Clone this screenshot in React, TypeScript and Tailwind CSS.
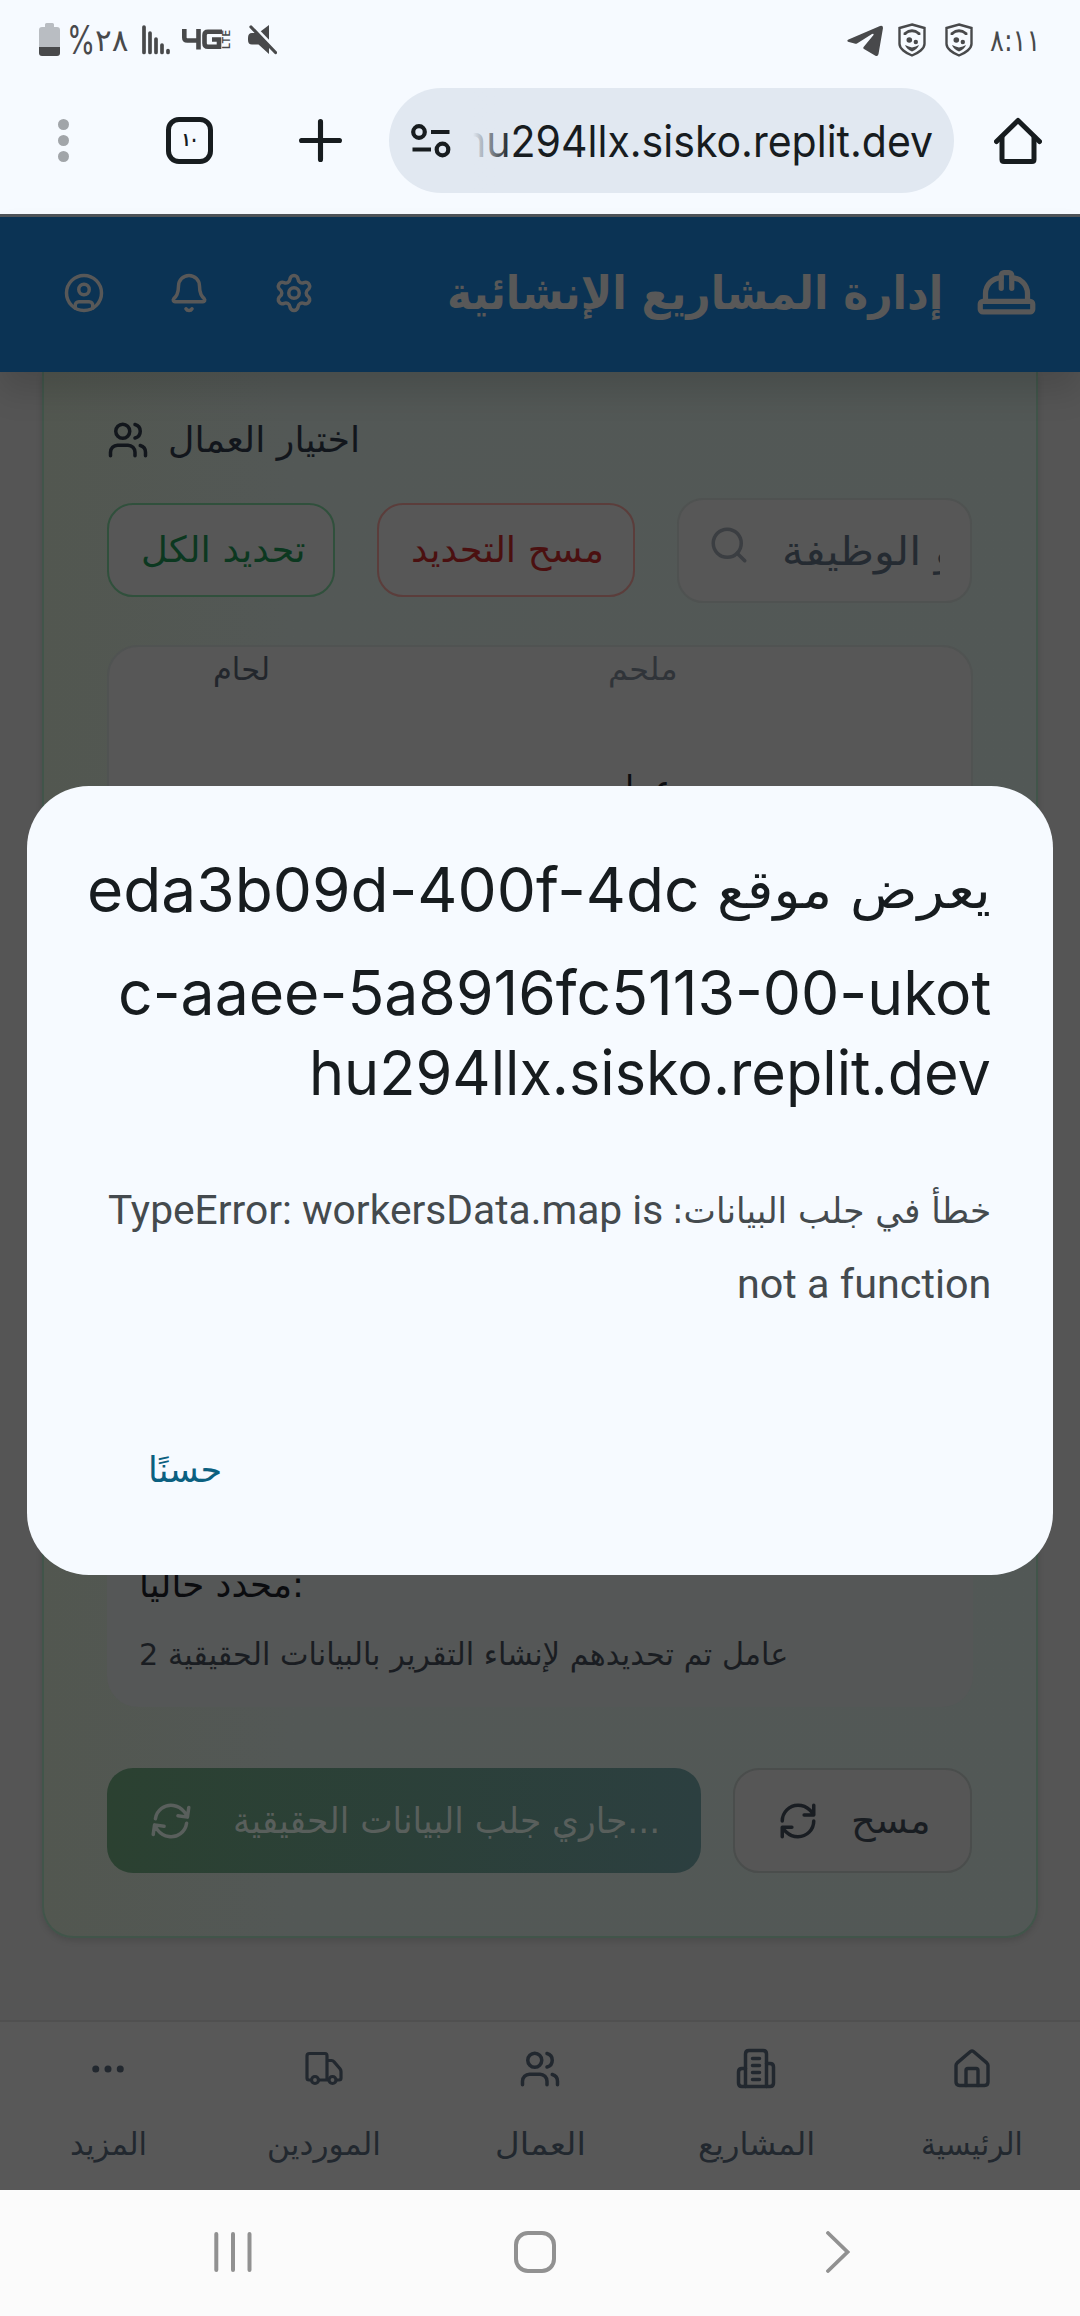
import { useLayoutEffect, useRef, useState, type ReactNode } from "react";
import { Bell, Ellipsis, HardHat, Search, Settings, Users } from "lucide-react";

const AR = "font-['DejaVu_Sans',sans-serif]";

/** One line of text stretched horizontally to an exact width. */
function Fit({ w, className = "", dir = "rtl", children }: { w: number; className?: string; dir?: "rtl" | "ltr"; children: ReactNode }) {
  const ref = useRef<HTMLSpanElement>(null);
  const [scale, setScale] = useState(1);
  useLayoutEffect(() => {
    if (ref.current) setScale(w / ref.current.offsetWidth);
  }, [w]);
  return (
    <span dir="ltr" className={`block shrink-0 ${className}`} style={{ width: w }}>
      <span ref={ref} dir={dir} className="inline-block origin-left whitespace-nowrap" style={{ transform: `scaleX(${scale})` }}>
        {children}
      </span>
    </span>
  );
}

function Shield() {
  return (
    <svg viewBox="0 0 28 34" className="h-[34px] w-[28px]" fill="none" stroke="#48494b" strokeWidth="2.4">
      <path d="M14 1.500 26.500 5V21c0 4.500-6 9-12.500 11.500C7.500 30 1.500 25.500 1.500 21V5Z" />
      <path d="M7 12V10.500q7-5.500 14 0V12" strokeWidth="2.800" />
      <circle cx="11.300" cy="17" r="2.800" fill="#48494b" stroke="none" />
      <circle cx="17.800" cy="19" r="2.200" fill="#48494b" stroke="none" />
      <path d="M7 22q4 1.500 7 2.500 4-1 7-2.500-1.500 4-7 6.500Q8.500 26 7 22Z" fill="#48494b" stroke="none" />
    </svg>
  );
}

function StatusBar() {
  return (
    <div className="flex h-[70px] items-start justify-between pr-[40px] pl-[39px] pt-[23px]">
      <div className="flex">
        <svg viewBox="0 0 21 34" className="h-[34px] w-[21px]">
          <path d="M6 1.500Q6 0 7.500 0h6Q15 0 15 1.500V4h3q3 0 3 3v18H0V7q0-3 3-3h3Z" fill="#b9bdc2" />
          <path d="M0 24h21v6q0 3-3 3H3q-3 0-3-3Z" fill="#48494b" />
        </svg>
        <div className="ml-[7px] flex h-[34px] w-[61px] items-center text-[#48494b]">
          <Fit w={28} dir="ltr" className="font-['Inter',sans-serif] text-[39px] leading-[38px]">%</Fit>
          <Fit w={33} className={`${AR} text-[31px] leading-[34px]`}>٢٨</Fit>
        </div>
        <svg viewBox="0 0 28 31" className="mt-[1px] ml-[14px] h-[31px] w-[28px]" stroke="#48494b" strokeWidth="3.700" strokeLinecap="round">
          <path d="M2 3V28.500M8 9V28.500M14 15V28.500M20 21V28.500M26 26.500V28.500" />
        </svg>
        <div className="mt-[5px] ml-[12px] flex h-[23px] w-[50px] text-[#48494b]">
          <svg viewBox="0 0 40 22" className="h-[22px] w-[40px]" fill="none" stroke="#48494b" strokeWidth="4.600">
            <path d="M2.300 1v8.500q0 3 3 3H17M16.500 1v20.500" />
            <path d="M40 3.800H26q-3.500 0-3.500 3.500v8q0 3.500 3.500 3.500h11v-7.300H30" />
          </svg>
          <span className="flex w-[10px] items-center justify-center">
            <span className="-rotate-90 font-['Inter',sans-serif] text-[11px] leading-none font-semibold">LTE</span>
          </span>
        </div>
        <svg viewBox="0 0 29 31" className="mt-[1px] ml-[16px] h-[31px] w-[29px]">
          <path d="M21 1v29L10.500 20.500H4Q0 20.500 0 16v-2Q0 9 4 9h6.500Z" fill="#48494b" />
          <path d="M2 -1 31 29" stroke="#f6faff" strokeWidth="4" />
          <path d="M3 3 27.500 28.500" stroke="#48494b" strokeWidth="3.200" strokeLinecap="round" />
        </svg>
      </div>
      <div className="flex">
        <svg viewBox="0 0 36 32" className="mt-[2px] h-[32px] w-[36px]">
          <path d="M1.500 14.500 33 1q3-1 3 2l-4.500 26q-.6 3-3.500 1.500L17 24q-1.500-1 0-2.500l9.500-11.500q.5-2-1.500-1L10 18.500q-1 .6-2.500 0L1 16.700Q-.5 15.500 1.500 14.500Z" fill="#48494b" />
        </svg>
        <div className="ml-[15px]"><Shield /></div>
        <div className="ml-[19px]"><Shield /></div>
        <Fit w={50} dir="ltr" className={`${AR} ml-[17px] text-[31px] leading-[34px] text-[#48494b]`}>٨:١١</Fit>
      </div>
    </div>
  );
}

function Toolbar() {
  return (
    <div className="flex h-[144px] items-start pt-[18px]">
      <div className="ml-[58px] flex h-[105px] w-[11px] flex-col items-center justify-center gap-[5px]">
        <span className="size-[11px] rounded-full bg-[#a1a5a9]" />
        <span className="size-[11px] rounded-full bg-[#a1a5a9]" />
        <span className="size-[11px] rounded-full bg-[#a1a5a9]" />
      </div>
      <div className={`${AR} mt-[29px] ml-[97px] flex size-[47px] items-center justify-center rounded-[13px] border-[5px] border-[#171c1f] pb-[2px] text-[19px] leading-none font-bold text-[#171c1f]`}>
        <Fit w={16} dir="ltr">١٠</Fit>
      </div>
      <svg viewBox="0 0 42 42" className="mt-[31px] ml-[86px] size-[43px]" stroke="#171c1f" strokeWidth="5" strokeLinecap="round">
        <path d="M21 2.500v37M2.500 21h37" />
      </svg>
      <div className="ml-[47px] flex h-[105px] w-[565px] items-center rounded-full bg-[#e1e8f1]">
        <svg viewBox="0 0 40 34" className="ml-[22px] h-[34px] w-[40px]" fill="none" stroke="#171c1f" strokeWidth="4.200">
          <circle cx="8" cy="8" r="5.800" />
          <circle cx="31.500" cy="25.500" r="5.800" />
          <path d="M20 8h18.500M1.500 25.500H20" />
        </svg>
        <div className="relative ml-[22px] flex h-[105px] w-[460px] justify-end overflow-hidden">
          <Fit w={471} dir="ltr" className="font-['Inter',sans-serif] text-[44px] leading-[107px] text-[#171c1f]">hu294llx.sisko.replit.dev</Fit>
          <div className="absolute inset-y-0 left-0 w-[38px] bg-gradient-to-r from-[#e1e8f1] to-[#e1e8f1]/0" />
        </div>
      </div>
      <svg viewBox="0 0 48 48" className="mt-[29px] ml-[40px] size-[48px]" fill="none" stroke="#171c1f" strokeWidth="5" strokeLinejoin="round" strokeLinecap="round">
        <path d="M2.500 24.500 24 3.500l21.500 21" />
        <path d="M8 20v22.500q0 2 2 2h28q2 0 2-2V20" />
      </svg>
    </div>
  );
}

/** Account avatar: a head over squared shoulders inside a ring. */
function AccountIcon({ className = "" }: { className?: string }) {
  return (
    <svg viewBox="0 0 24 24" className={`size-[42px] shrink-0 ${className}`} fill="none" stroke="currentColor" strokeWidth="2" strokeLinecap="round" strokeLinejoin="round">
      <circle cx="12" cy="12" r="10" />
      <circle cx="12" cy="10" r="3" />
      <path d="M7 20.662V19a2 2 0 0 1 2-2h6a2 2 0 0 1 2 2v1.662" />
    </svg>
  );
}

function AppHeader() {
  return (
    <header className="relative z-10 flex h-[155px] shrink-0 items-center bg-[#0b3354] pb-[3px] text-[#585858] shadow-[0_20px_30px_rgba(0,0,0,0.13)]">
      <AccountIcon className="ml-[63px]" />
      <Bell className="ml-[63px]" size={42} />
      <Settings className="ml-[63px]" size={42} />
      <Fit w={496} className={`${AR} ml-[132px] text-[46px] leading-[60px] font-bold`}>إدارة المشاريع الإنشائية</Fit>
      <HardHat className="ml-[32px]" size={63} />
    </header>
  );
}

function WorkersCard() {
  return (
    <section className="mx-[42px] flex h-[1566px] flex-col rounded-b-[31px] border-x-2 border-b-2 border-[#41554a] bg-gradient-to-r from-[#525750] via-[#535856] via-25% to-[#525856] px-[63px] pt-[47px] shadow-[0_3px_6px_rgba(0,0,0,0.12)]">
      <div className="flex h-[42px] items-center text-[#12161c]">
        <Users size={42} />
        <Fit w={192} className={`${AR} ml-[19px] text-[36px] leading-[44px]`}>اختيار العمال</Fit>
      </div>

      <div className="mt-[37px] flex h-[105px] items-center">
        <button className="mb-[1px] flex h-[94px] w-[228px] items-center rounded-[26px] border-2 border-[#30503c] bg-[#575757] pl-[30px]">
          <Fit w={165} className={`${AR} text-[36px] leading-[90px] text-[#0c3820]`}>تحديد الكل</Fit>
        </button>
        <button className="mb-[1px] ml-[42px] flex h-[94px] w-[258px] items-center rounded-[26px] border-2 border-[#5b3d3b] bg-[#575757] pl-[30px]">
          <Fit w={193} className={`${AR} text-[36px] leading-[90px] text-[#4b1010]`}>مسح التحديد</Fit>
        </button>
        <div className="ml-[42px] flex h-[105px] w-[295px] items-center rounded-[26px] border-2 border-[#4f5251] bg-[#575757]">
          <Search size={42} className="mb-[12px] ml-[29px] text-[#3b3e42]" />
          <div className="ml-[32px] flex w-[158px] overflow-hidden">
            <Fit w={174} className={`${AR} text-[40px] leading-[92px] text-[#252b32]`}>و الوظيفة</Fit>
          </div>
        </div>
      </div>

      <div className="mt-[42px] flex h-[760px] flex-col overflow-hidden rounded-[31px] border-2 border-[#505352] bg-[#575757]">
        <div className="flex h-[42px] pl-[104px]">
          <Fit w={57} className={`${AR} text-[31px] leading-[44px] text-[#22262c]`}>لحام</Fit>
          <Fit w={70} className={`${AR} ml-[338px] text-[31px] leading-[44px] text-[#303439]`}>ملحم</Fit>
        </div>
        <div className="mt-[76px] ml-[500px]">
          <Fit w={65} className={`${AR} text-[36px] leading-[48px] text-[#0c0d10]`}>عمار</Fit>
        </div>
      </div>

      <div className="mt-[42px] flex h-[260px] flex-col justify-end rounded-[31px] bg-[#555757] pb-[24px] pl-[32px]">
        <Fit w={165} dir="ltr" className={`${AR} text-[36px] leading-[58px] text-[#0b0c0f]`}>محدد حاليا:</Fit>
        <Fit w={649} dir="ltr" className={`${AR} mt-[11px] text-[31px] leading-[58px] text-[#1a1d22]`}>2 عامل تم تحديدهم لإنشاء التقرير بالبيانات الحقيقية</Fit>
      </div>

      <div className="mt-auto mb-[63px] flex h-[105px] shrink-0">
        <button className="flex h-[105px] w-[594px] items-center rounded-[26px] bg-gradient-to-r from-[#2b4131] to-[#2c3f40] text-[#595f5c]">
          <RefreshIcon className="ml-[43px] rotate-[8deg]" />
          <Fit w={427} dir="ltr" className={`${AR} ml-[41px] text-[36px] leading-[105px]`}>جاري جلب البيانات الحقيقية...</Fit>
        </button>
        <button className="ml-[32px] flex h-[105px] w-[239px] items-center rounded-[26px] border-2 border-[#4a4d4c] bg-[#565656] text-[#191d22]">
          <RefreshIcon className="ml-[42px]" />
          <Fit w={80} className={`${AR} ml-[29px] text-[36px] leading-[101px]`}>مسح</Fit>
        </button>
      </div>
    </section>
  );
}

/** Refresh arrows with the arc ends pulled apart. */
function RefreshIcon({ className = "" }: { className?: string }) {
  return (
    <svg viewBox="0 0 24 24" className={`size-[42px] shrink-0 ${className}`} fill="none" stroke="currentColor" strokeWidth="2" strokeLinecap="round" strokeLinejoin="round">
      <path d="M3 12a9 9 0 0 1 9-9 9.750 9.750 0 0 1 6.740 2.740L21 8M21 3v5.500h-5.500" />
      <path d="M21 12a9 9 0 0 1-9 9 9.750 9.750 0 0 1-6.740-2.740L3 16M8.500 15.500H3V21" />
    </svg>
  );
}

function TruckIcon() {
  return (
    <svg viewBox="0 0 42 42" className="size-[42px]" fill="none" stroke="currentColor" strokeWidth="3.200" strokeLinejoin="round">
      <path d="M7.500 32H6q-2 0-2-2V8q0-2.500 2.500-2.500h15.500Q24 5.500 24 8v24M14 32h12" />
      <path d="M24 12.500h4.500q1.500 0 2.500 1.200l6 7q1 1.300 1 3V30q0 2-2 2h-3" />
      <circle cx="12" cy="32" r="3.500" />
      <circle cx="29.500" cy="32" r="3.500" />
    </svg>
  );
}

function BuildingIcon() {
  return (
    <svg viewBox="0 0 42 42" className="size-[42px]" fill="none" stroke="currentColor" strokeWidth="3.500" strokeLinejoin="round" strokeLinecap="round">
      <path d="M10.500 38.500V6q0-3.500 3.500-3.500h14q3.500 0 3.500 3.500v32.500" />
      <path d="M10.500 20.500H7q-3.500 0-3.500 3.500v11q0 3.500 3.500 3.500h28q3.500 0 3.500-3.500V19q0-3.500-3.500-3.500h-3.500" />
      <path d="M17.500 10.500h7M17.500 17.500h7M17.500 24.500h7M17.500 31.500h7" />
    </svg>
  );
}

function HouseIcon() {
  return (
    <svg viewBox="0 0 42 42" className="size-[42px]" fill="none" stroke="currentColor" strokeWidth="3.400" strokeLinejoin="round" strokeLinecap="round">
      <path d="M5 17.500q0-1.500 1.200-2.600L19.500 3.500q1.500-1.200 3 0l13.300 11.400Q37 16 37 17.500V34q0 3.500-3.500 3.500h-25Q5 37.500 5 34Z" />
      <path d="M15 37.500V22.500q0-2 2-2h8q2 0 2 2v15" />
    </svg>
  );
}

const tabs = [
  { label: "المزيد", w: 77, icon: <Ellipsis size={42} /> },
  { label: "الموردين", w: 114, icon: <TruckIcon /> },
  { label: "العمال", w: 91, icon: <Users size={42} /> },
  { label: "المشاريع", w: 117, icon: <BuildingIcon /> },
  { label: "الرئيسية", w: 102, icon: <HouseIcon /> },
];

function TabBar() {
  return (
    <nav className="grid h-[170px] shrink-0 grid-cols-5 border-t-2 border-[#505050] bg-[#585858] text-[#22282f]">
      {tabs.map((t) => (
        <div key={t.label} className="flex flex-col items-center pt-[26px]">
          {t.icon}
          <Fit w={t.w} className={`${AR} mt-[29px] text-[31px] leading-[50px]`}>{t.label}</Fit>
        </div>
      ))}
    </nav>
  );
}

function AlertDialog() {
  return (
    <div role="dialog" className="absolute top-[786px] left-[27px] z-20 flex h-[789px] w-[1026px] flex-col rounded-[62px] bg-[#f6faff] pr-[62px] pl-[60px]">
      <div className="mt-[59px] flex flex-col items-end font-['Inter',sans-serif] text-[62px] text-[#171c1f]">
        <div className="flex h-[90px] items-center">
          <Fit w={613} dir="ltr" className="leading-[90px]">eda3b09d-400f-4dc</Fit>
          <Fit w={274} className={`${AR} ml-[17px] text-[53px] leading-[90px]`}>يعرض موقع</Fit>
        </div>
        <Fit w={873} dir="ltr" className="mt-[18px] leading-[80px]">c-aaee-5a8916fc5113-00-ukot</Fit>
        <Fit w={682} dir="ltr" className="leading-[80px]">hu294llx.sisko.replit.dev</Fit>
      </div>
      <div className="mt-[61px] flex flex-col items-end font-['Roboto',sans-serif] text-[40px] text-[#444a4e]">
        <div className="flex h-[74px]">
          <Fit w={555} dir="ltr" className="leading-[74px]">TypeError: workersData.map is</Fit>
          <Fit w={319} className={`${AR} ml-[9px] text-[35px] leading-[74px]`}>خطأ في جلب البيانات:</Fit>
        </div>
        <Fit w={254} dir="ltr" className="leading-[74px]">not a function</Fit>
      </div>
      <button className="mt-[118px] ml-[61px] self-start text-[#0b6080]">
        <Fit w={74} className={`${AR} text-[35px] leading-[60px]`}>حسنًا</Fit>
      </button>
    </div>
  );
}

function SystemNav() {
  return (
    <div className="flex h-[126px] shrink-0 items-center bg-[#fbfbfb] pb-[2px] text-[#919191]">
      <svg viewBox="0 0 38 42" className="ml-[214px] h-[42px] w-[38px]" stroke="currentColor" strokeWidth="4" strokeLinecap="round">
        <path d="M2.300 3v36M19 3v36M35.500 3v36" />
      </svg>
      <div className="ml-[262px] size-[42px] rounded-[14px] border-4 border-current" />
      <svg viewBox="0 0 24 42" className="ml-[270px] h-[42px] w-[24px]" fill="none" stroke="currentColor" strokeWidth="3.800" strokeLinecap="round">
        <path d="M2 2 21.500 21 2 40" />
      </svg>
    </div>
  );
}

export default function App() {
  return (
    <div dir="ltr" className="relative flex h-[2316px] w-[1080px] flex-col overflow-hidden bg-[#555555]">
      <div className="h-[214px] shrink-0 bg-[#f6faff]">
        <StatusBar />
        <Toolbar />
      </div>
      <div className="h-[3px] shrink-0 bg-[#4f5459]" />
      <AppHeader />
      <main className="h-[1648px] shrink-0 overflow-hidden">
        <WorkersCard />
      </main>
      <TabBar />
      <SystemNav />
      <AlertDialog />
    </div>
  );
}
